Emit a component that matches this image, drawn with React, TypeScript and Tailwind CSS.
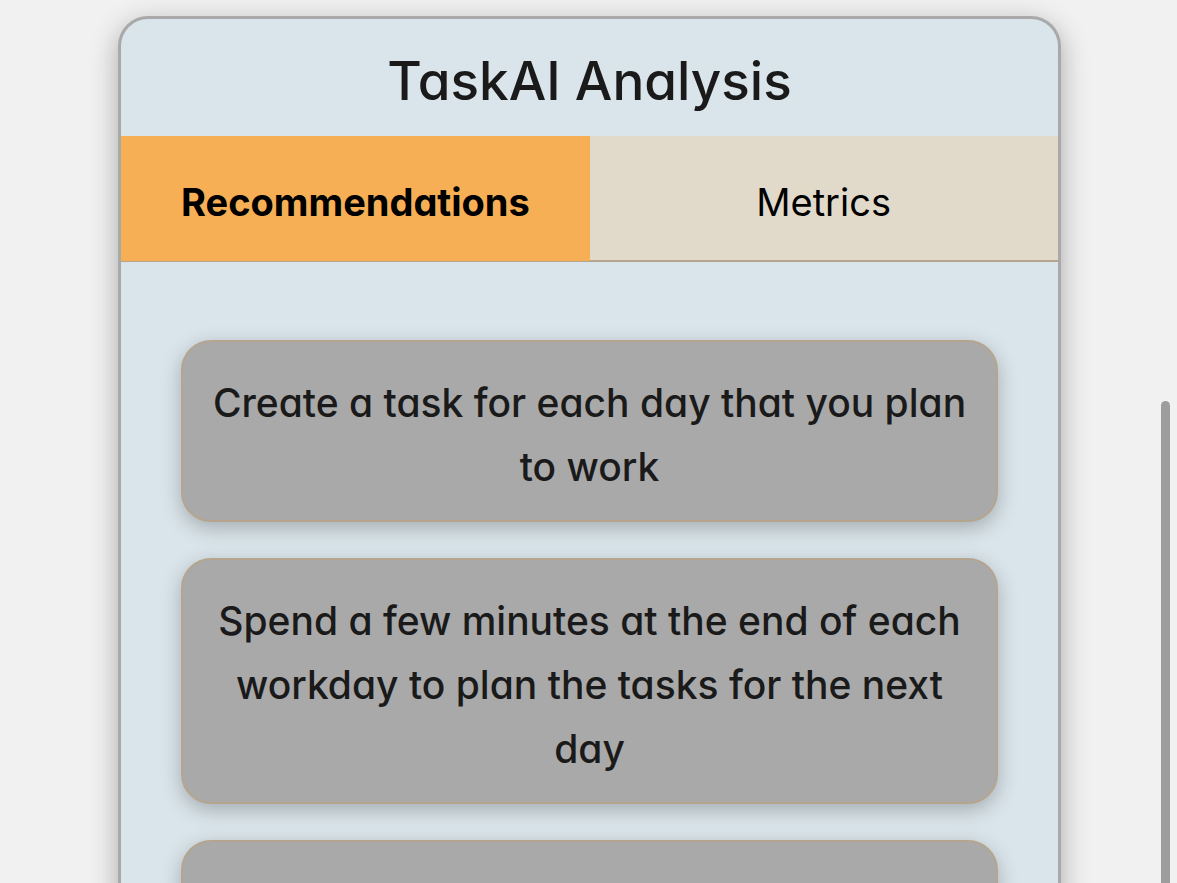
import { useState } from "react";

const recommendations = [
  "Create a task for each day that you plan to work",
  "Spend a few minutes at the end of each workday to plan the tasks for the next day",
];

const tabs = ["Recommendations", "Metrics"];

export default function App() {
  const [active, setActive] = useState(tabs[0]);

  return (
    <div className="relative h-screen overflow-hidden bg-[#f1f1f1] pt-4 pl-0.5 font-['Inter','Liberation_Sans',sans-serif] text-[#1a1a1a] [font-feature-settings:'cv11'_1]">
      <main className="mx-auto min-h-screen w-[80.2%] overflow-hidden rounded-t-[30px] border-[3px] border-b-0 border-[#a9a9a9] bg-[#dae5eb] shadow-[0_8px_28px_rgba(0,0,0,0.3)]">
        <h1 className="px-4 pt-[22px] pb-[14px] text-center text-[53px] leading-[81px] font-medium">TaskAI Analysis</h1>
        <div role="tablist" className="flex h-[126px] border-b-2 border-[#b7a48f] bg-[#e1dacb]">
          {tabs.map((tab) => (
            <button
              key={tab}
              type="button"
              role="tab"
              aria-selected={active === tab}
              onClick={() => setActive(tab)}
              className={
                active === tab
                  ? "-mb-px flex-1 basis-0 bg-[#f6af55] pt-2 text-[38px] font-bold text-black"
                  : "flex-1 basis-0 pt-2 text-[38px] text-black"
              }
            >
              {tab}
            </button>
          ))}
        </div>
        <ul className="flex flex-col gap-9 px-[60px] pt-[78px] text-center text-[39px] leading-[64px] font-medium">
          {recommendations.map((text) => (
            <li
              key={text}
              className="rounded-[30px] border-2 border-[#b5a58f] bg-[#a9a9a9] px-5 pt-[29px] pb-[21px] shadow-[0_6px_20px_rgba(0,0,0,0.25)]"
            >
              {text}
            </li>
          ))}
          <li className="h-[182px] rounded-[30px] border-2 border-[#b5a58f] bg-[#a9a9a9] shadow-[0_6px_20px_rgba(0,0,0,0.25)]" />
        </ul>
      </main>
      <div className="absolute top-[401px] right-[7px] bottom-0 w-[9px] rounded-t-full bg-[#9d9d9d]" />
    </div>
  );
}
